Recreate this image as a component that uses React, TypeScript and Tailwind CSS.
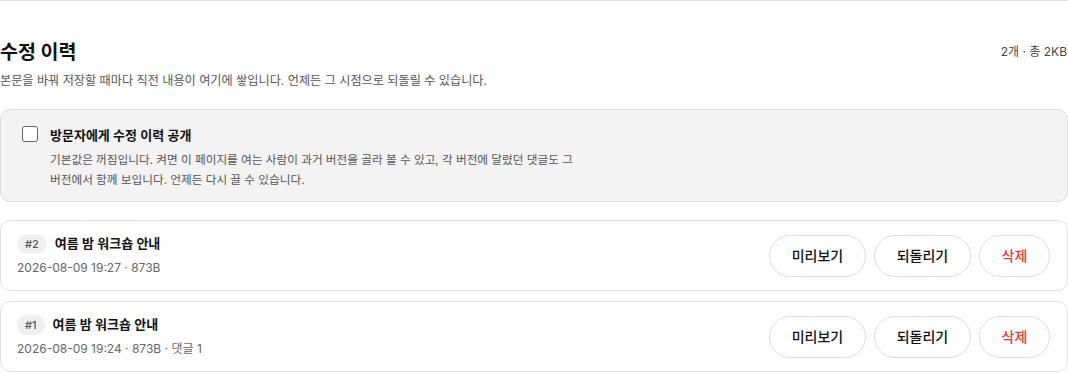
import React from "react";

const font = { fontFamily: 'Inter, "Noto Sans CJK KR", sans-serif' };

function Row({ n, meta }: { n: string; meta: string }) {
  return (
    <div className="flex items-center justify-between rounded-[10px] border border-[#e2e2e2] bg-white h-[71px] pl-[16px] pr-[17px]">
      <div className="flex flex-col">
        <div className="flex items-center gap-[8px]">
          <span className="inline-flex items-center justify-center h-[20px] px-[8px] rounded-full bg-[#f0f0f0] text-[11px] text-[#555] font-medium">{n}</span>
          <span className="text-[13px] font-semibold text-[#111]">여름 밤 워크숍 안내</span>
        </div>
        <div className="mt-[5px] text-[12px] text-[#666]">{meta}</div>
      </div>
      <div className="flex items-center gap-[8px]">
        <button className="h-[42px] w-[97px] rounded-full border border-[#dedede] bg-white text-[14px] font-medium text-[#111]">미리보기</button>
        <button className="h-[42px] w-[97px] rounded-full border border-[#dedede] bg-white text-[14px] font-medium text-[#111]">되돌리기</button>
        <button className="h-[42px] w-[71px] rounded-full border border-[#dedede] bg-white text-[14px] font-medium text-[#e0393e]">삭제</button>
      </div>
    </div>
  );
}

export default function App() {
  return (
    <div style={font} className="w-[1068px] bg-white">
      <div className="h-px bg-[#e5e5e5]" />
      <div className="pt-[37px]">
        <div className="flex items-end justify-between">
          <h2 className="text-[19.5px] font-bold text-[#111] leading-[28px]">수정 이력</h2>
          <span className="text-[12px] text-[#444] mb-[5px] mr-[1px]">2개 · 총 2KB</span>
        </div>
        <p className="mt-[6px] text-[12.15px] text-[#555] leading-[18px] break-keep">본문을 바꿔 저장할 때마다 직전 내용이 여기에 쌓입니다. 언제든 그 시점으로 되돌릴 수 있습니다.</p>
      </div>
      <div className="mt-[19px] rounded-[10px] border border-[#dcdcdc] bg-[#f3f3f3] pl-[21px] pt-[15px] pb-[11px] flex gap-[12px]">
        <div className="mt-[1px] w-[16px] h-[16px] rounded-[3px] border border-[#666] bg-white shrink-0" />
        <div>
          <div className="text-[13px] font-semibold text-[#111] leading-[20px]">방문자에게 수정 이력 공개</div>
          <p className="mt-[5px] w-[540px] text-[11.65px] text-[#555] leading-[20px] break-keep">기본값은 꺼짐입니다. 켜면 이 페이지를 여는 사람이 과거 버전을 골라 볼 수 있고, 각 버전에 달렸던 댓글도 그 버전에서 함께 보입니다. 언제든 다시 끌 수 있습니다.</p>
        </div>
      </div>
      <div className="mt-[18px] flex flex-col gap-[10px]">
        <Row n="#2" meta="2026-08-09 19:27 · 873B" />
        <Row n="#1" meta="2026-08-09 19:24 · 873B · 댓글 1" />
      </div>
    </div>
  );
}
